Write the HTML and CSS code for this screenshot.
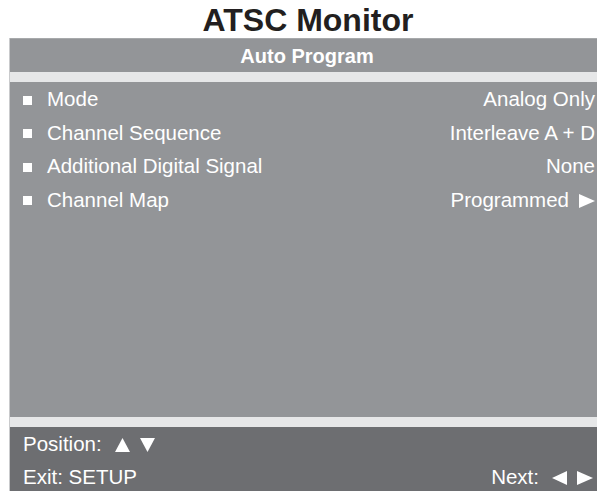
FILE: index.html
```html
<!DOCTYPE html>
<html lang="en">
<head>
    <meta charset="UTF-8">
    <title>ATSC Monitor</title>
    <link rel="stylesheet" href="styles.css">
</head>
<body>
    <h1 class="title">ATSC Monitor</h1>
    <div class="panel">
        <div class="panel-head">Auto Program</div>
        <div class="stripe"></div>
        <ul class="menu">
            <li class="item"><span class="label"><i class="dot"></i>Mode</span><span class="value">Analog Only</span></li>
            <li class="item"><span class="label"><i class="dot"></i>Channel Sequence</span><span class="value">Interleave A + D</span></li>
            <li class="item"><span class="label"><i class="dot"></i>Additional Digital Signal</span><span class="value">None</span></li>
            <li class="item"><span class="label"><i class="dot"></i>Channel Map</span><span class="value">Programmed<svg class="tri gap" width="16" height="14" viewBox="0 0 16 14"><path d="M0 0L16 7L0 14Z"/></svg></span></li>
        </ul>
        <div class="stripe"></div>
        <div class="foot">
            <div class="foot-row">
                <span class="keys">Position:<svg class="tri first" width="15" height="14" viewBox="0 0 15 14"><path d="M7.5 0L15 14H0Z"/></svg><svg class="tri gap" width="15" height="14" viewBox="0 0 15 14"><path d="M0 0H15L7.5 14Z"/></svg></span>
            </div>
            <div class="foot-row">
                <span>Exit: SETUP</span>
                <span class="keys">Next:<svg class="tri first" width="15" height="14" viewBox="0 0 15 14"><path d="M15 0V14L0 7Z"/></svg><svg class="tri gap" width="16" height="14" viewBox="0 0 16 14"><path d="M0 0L16 7L0 14Z"/></svg></span>
            </div>
        </div>
    </div>
</body>
</html>
```

FILE: styles.css
```css
body { margin: 0; font-family: "Liberation Sans", Arial, sans-serif; background: #fff; color: #fff; }
.title { margin: 0; padding: 2px 0 0 18px; height: 36px; line-height: 36px; text-align: center; font-size: 32px; font-weight: bold; color: #231f20; }
.panel { margin: 0 1px 0 9px; background: #939598; border-left: 1px solid #c9cacc; }
.panel-head { height: 34px; line-height: 34px; text-align: center; padding-left: 7px; font-size: 20px; font-weight: bold; border-top: 1px solid #a7a9ab; box-sizing: border-box; }
.stripe { height: 10px; background: #e6e7e8; }
.menu { list-style: none; margin: 0; padding: 0; height: 335px; font-size: 20.5px; }
.item { display: flex; justify-content: space-between; align-items: center; height: 33.5px; line-height: 33.5px; padding: 0 2px 0 13px; }
.label { display: flex; align-items: center; }
.dot { display: inline-block; width: 9px; height: 9px; background: #fff; margin: 3px 15px 0 0; }
.tri { fill: #fff; vertical-align: -1px; }
.tri.gap { margin-left: 10px; }
.tri.first { margin-left: 13px; }
.foot { background: #6d6e71; height: 64px; padding-top: 1px; box-sizing: border-box; font-size: 20.5px; }
.foot-row { display: flex; justify-content: space-between; height: 32.5px; line-height: 32.5px; padding: 0 4px 0 13px; }
```
